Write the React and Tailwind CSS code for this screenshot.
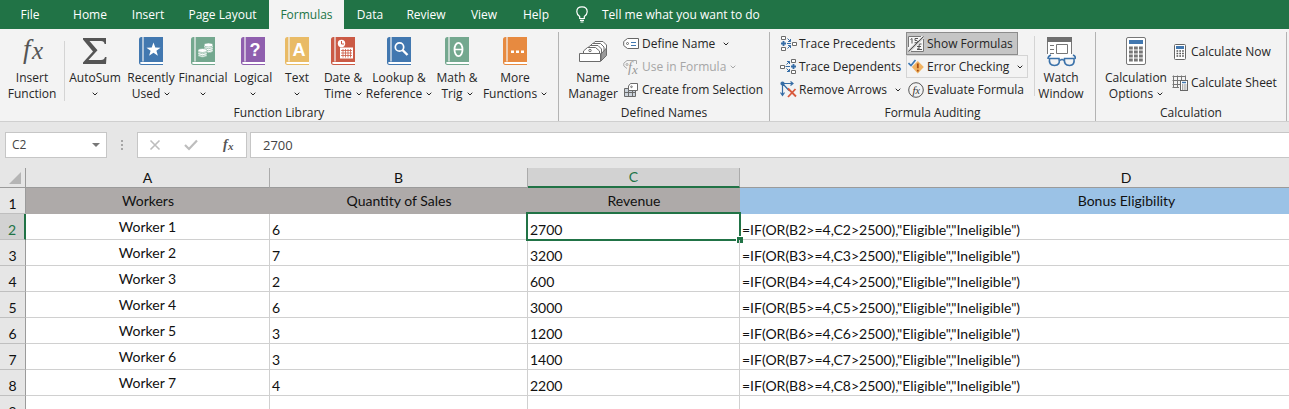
import React, { useState } from "react";
import clsx from "clsx";

const TABS = [
  { name: "File", width: "w-15" },
  { name: "Home", width: "w-15" },
  { name: "Insert", width: "w-14" },
  { name: "Page Layout", width: "w-[93px]" },
  { name: "Formulas", width: "w-[75px]" },
  { name: "Data", width: "w-13" },
  { name: "Review", width: "w-15" },
  { name: "View", width: "w-14" },
  { name: "Help", width: "w-12" },
];

const WORKERS = [
  { name: "Worker 1", sales: 6, revenue: 2700 },
  { name: "Worker 2", sales: 7, revenue: 3200 },
  { name: "Worker 3", sales: 2, revenue: 600 },
  { name: "Worker 4", sales: 6, revenue: 3000 },
  { name: "Worker 5", sales: 3, revenue: 1200 },
  { name: "Worker 6", sales: 3, revenue: 1400 },
  { name: "Worker 7", sales: 4, revenue: 2200 },
];

/* ---------- ICONS ---------- */

const Chevron = ({ className }) => (
  <svg viewBox="0 0 6 4" className={clsx("h-1 w-1.5 shrink-0", className)} fill="none" stroke="currentColor">
    <path d="M.7.7 3 3 5.3.7" />
  </svg>
);

const Book = ({ color, children }) => (
  <svg viewBox="0 0 24 28" className="h-7 w-6">
    <path d="M2.5 0H24V25H2.5L0 26.5V2.5Q0 0 2.5 0Z" fill={color} />
    <path d="M4 0V24.5" stroke="#f3f3f3" strokeWidth="1.2" />
    <path d="M1 26Q1.5 25 3 25H24V27H2Q1 27 1 26Z" fill="#fff" />
    <path d="M0 25Q0 28 2.5 28H24V27H3Q1 27 1 25.5Z" fill={color} />
    {children}
  </svg>
);

const BookLetter = ({ children }) => (
  <text
    x="14"
    y="19"
    textAnchor="middle"
    fill="#fff"
    fontSize="18"
    fontWeight="bold"
    fontFamily="Liberation Sans, sans-serif"
  >
    {children}
  </text>
);

const FxIcon = () => (
  <svg viewBox="0 0 26 28" className="h-7 w-[26px] overflow-visible" fill="#555">
    <text x="4" y="21" fontSize="27" fontStyle="italic" fontFamily="Liberation Serif, serif">f</text>
    <text x="13" y="22" fontSize="25" fontStyle="italic" fontFamily="Liberation Serif, serif">x</text>
  </svg>
);

const SigmaIcon = () => (
  <svg viewBox="0 0 26 28" className="h-7 w-[26px]" fill="#555">
    <path d="M1 1H24V7H22.6Q22.2 4 19 4H7.5L15.5 13.2 6.5 23H19Q22.4 23 23 20H24.5L24 27H1V25.6L11 14.6 1 2.6Z" />
  </svg>
);

const StarBook = () => (
  <Book color="#4278b0">
    <path d="M14.5 5.5 16.3 10.5 21.5 10.7 17.4 13.8 18.9 18.7 14.5 15.8 10.1 18.7 11.6 13.8 7.5 10.7 12.7 10.5Z" fill="#fff" />
  </Book>
);

const CoinsBook = () => (
  <Book color="#74a88f">
    <g fill="#fff" stroke="#74a88f" strokeWidth=".6">
      <path d="M13 12.5V14.5Q17.5 17 22 14.5V12.5Z" />
      <path d="M13 10.5V12.5Q17.5 15 22 12.5V10.5Z" />
      <path d="M13 8V10.5Q17.5 13 22 10.5V8Z" />
      <ellipse cx="17.5" cy="8" rx="4.5" ry="2" />
      <path d="M7 17.5V19Q11.5 21.5 16 19V17.5Z" />
      <path d="M7 15.5V17.5Q11.5 20 16 17.5V15.5Z" />
      <path d="M7 13.5V15.5Q11.5 18 16 15.5V13.5Z" />
      <ellipse cx="11.5" cy="13.5" rx="4.5" ry="2" />
    </g>
  </Book>
);

const DateBook = () => (
  <Book color="#cb5a45">
    <circle cx="10.5" cy="6.5" r="3.7" fill="#fff" />
    <path d="M10.5 4V7H13" stroke="#cb5a45" fill="none" />
    <path d="M9 10.5H22V21.5H9Z" fill="#fff" />
    <path d="M10 13.5H21M10 16H21M10 18.5H21M12 12V20.5M14.5 12V20.5M17 12V20.5M19.5 12V20.5" stroke="#cb5a45" strokeWidth=".8" />
  </Book>
);

const LookupBook = () => (
  <Book color="#4278b0">
    <circle cx="12.5" cy="10" r="4.2" fill="none" stroke="#fff" strokeWidth="1.7" />
    <path d="M15.5 13 20.5 18" stroke="#fff" strokeWidth="2.4" />
  </Book>
);

const ThetaBook = () => (
  <Book color="#74a88f">
    <ellipse cx="13.5" cy="12.5" rx="4" ry="6.7" fill="none" stroke="#fff" strokeWidth="1.8" />
    <path d="M10 12.5H17" stroke="#fff" strokeWidth="1.5" />
  </Book>
);

const MoreBook = () => (
  <Book color="#e78a40">
    <path d="M8 13.5H11V16H8ZM13 13.5H16V16H13ZM18 13.5H21V16H18Z" fill="#fff" />
  </Book>
);

const NameManagerIcon = () => (
  <svg viewBox="0 0 28 28" className="h-7 w-7" fill="#fff" stroke="#6b6b6b">
    <path d="M12.5 8.5 16 4.5H24L27.5 8V17L23 22" />
    <path d="M9.5 10.5 13.5 6.5H21.5L25 10V18" />
    <path d="M7 13 11 8.5H19L22.5 12V20" />
    <path d="M4.5 16.5V14L8.5 10.5H16.5L20.5 14V16.5" />
    <circle cx="11" cy="13.5" r="1.2" />
    <path d="M22 17 27.5 11V18.5L22 24Z" fill="#999" />
    <path d="M.5 16.5H21.5V24.5H.5Z" />
  </svg>
);

const TagIcon = () => (
  <svg viewBox="0 0 16 16" className="h-4 w-4" fill="#fff" stroke="#666">
    <path d="M4.5 2.5H15.5V12.5H4.5L.7 9.5V5.5Z" />
    <circle cx="4.5" cy="7.5" r="1" />
    <path d="M8 6.5H13M8 9.5H13" stroke="#4278b0" />
  </svg>
);

const UseInFormulaIcon = () => (
  <svg viewBox="0 0 16 16" className="h-4 w-4 overflow-visible" fill="none" stroke="#aaa">
    <path d="M13.5 5V1.5H4L.8 4.2V7L4 9.5" />
    <circle cx="4" cy="5.5" r="1" />
    <text x="5" y="13" fontSize="14" fontStyle="italic" fontFamily="Liberation Serif, serif" fill="#999" stroke="none">f</text>
    <text x="9" y="15" fontSize="13" fontStyle="italic" fontFamily="Liberation Serif, serif" fill="#999" stroke="none">x</text>
  </svg>
);

const CreateIcon = () => (
  <svg viewBox="0 0 16 16" className="h-4 w-4" fill="#fff" stroke="#6b6b6b">
    <path d="M1.5 6.5H12.5V14.5H1.5Z" fill="#ccd4dc" />
    <path d="M1.5 10.5H12.5M5.5 6.5V14.5M9.5 6.5V14.5" />
    <path d="M7.5 1.5H14.5V8.5H5.5V4Z" />
    <circle cx="8.5" cy="4.8" r=".8" />
  </svg>
);

const PrecedentsIcon = () => (
  <svg viewBox="0 0 17 17" className="h-[17px] w-[17px]" fill="#fff" stroke="#6b6b6b">
    <path d="M1.5 1.5H5.5V4.5H1.5ZM1.5 12.5H5.5V15.5H1.5ZM12.5 7.5H16.5V10.5H12.5Z" />
    <path d="M1 8.5H6M3.5 6V11" stroke="#356ca5" strokeWidth="1.8" />
    <path d="M7 8.5H11M7.5 3.5 10.5 6.5M10.5 4V6.5H8M7.5 13.5 10.5 10.5M8 10.5H10.5V13" stroke="#356ca5" fill="none" />
  </svg>
);

const DependentsIcon = () => (
  <svg viewBox="0 0 17 17" className="h-[17px] w-[17px]" fill="#fff" stroke="#6b6b6b">
    <path d="M11.5 1.5H15.5V4.5H11.5ZM11.5 12.5H15.5V15.5H11.5ZM.5 7.5H4.5V10.5H.5Z" />
    <path d="M11 8.5H16M13.5 6V11" stroke="#356ca5" strokeWidth="1.8" />
    <path d="M5.5 8.5H10M6.5 6.5 9.5 3.5M7 3.5H9.5V6M6.5 10.5 9.5 13.5M7 13.5H9.5V11" stroke="#356ca5" fill="none" />
  </svg>
);

const RemoveArrowsIcon = () => (
  <svg viewBox="0 0 17 17" className="h-[17px] w-[17px]" fill="none" stroke="#356ca5" strokeWidth="1.2">
    <path d="M2.5 3V14M.5 11.5 2.5 14.5 4.5 11.5M3 2.5H13M10.5.5 13 2.5 10.5 4.5M3 3 9 9.5" />
    <circle cx="2.5" cy="2.5" r="1.5" fill="#356ca5" />
    <path d="M8 7.5 16 15.5M15.5 8 8 16" stroke="#d8593c" strokeWidth="1.8" />
  </svg>
);

const ShowFormulasIcon = () => (
  <svg viewBox="0 0 16 16" className="h-4 w-4" fill="none" stroke="#555">
    <path d="M0 0H15L0 14ZM16 2V16H2Z" fill="#f6f6f6" stroke="none" />
    <path d="M.5 11V.5H13M15.5 3V15.5H3" stroke="#777" />
    <path d="M15.5.5.5 15.5M2.5 3.5 4 2.5V7.5M10 2.5H7V4.5Q9.5 4 9.5 5.5 9.5 7 6.5 6.8M13.5 8Q10.5 7 11 10V13H9M9 10.5H13M9 13.5H14" />
  </svg>
);

const ErrorIcon = () => (
  <svg viewBox="0 0 16 16" className="h-4 w-4" fill="none">
    <path d="M9.8 2 15.8 8 9.8 14.5 3.8 8Z" fill="#f0b362" />
    <path d="M9.8 4.5V9.3M9.8 10.7V12.5" stroke="#a84e12" strokeWidth="1.8" />
    <path d="M.5 4 3 6.5 7.5 1" stroke="#3b78b5" strokeWidth="1.6" />
  </svg>
);

const EvaluateIcon = () => (
  <svg viewBox="0 0 16 16" className="h-4 w-4" fill="none" stroke="#555">
    <circle cx="8" cy="8" r="7.3" />
    <text x="4.5" y="11.5" fontSize="11" fontStyle="italic" fontFamily="Liberation Serif, serif" fill="#333" stroke="none">f</text>
    <text x="7.5" y="11.5" fontSize="10" fontStyle="italic" fontFamily="Liberation Serif, serif" fill="#333" stroke="none">x</text>
  </svg>
);

const WatchIcon = () => (
  <svg viewBox="0 0 30 30" className="h-[30px] w-[30px]" fill="none">
    <path d="M1.5 1H25.5V21H1.5Z" fill="#fff" />
    <path d="M1.5 17V5M25.5 5V17" stroke="#777" />
    <path d="M1 0H26V5H1Z" fill="#6f6f6f" />
    <path d="M4 8.5H8M4 12.5H8M4 16.5H8M10.5 7.5H21.5V16.5H10.5Z" stroke="#777" />
    <path d="M2 22Q2 19 5 18M27 18Q30 19 29 22M14 23.5Q16 21.5 18 23.5" stroke="#3b72aa" strokeWidth="1.6" />
    <path d="M3.5 21.5H13Q14.5 28.5 8.5 28.5 2.5 28.5 3.5 21.5ZM18.5 21.5H28Q29 28.5 23.5 28.5 17.5 28.5 18.5 21.5Z" fill="#f3f3f3" stroke="#3b72aa" strokeWidth="1.6" />
  </svg>
);

const CalculatorIcon = () => (
  <svg viewBox="0 0 20 28" className="h-7 w-5" fill="none">
    <rect x=".5" y=".5" width="19" height="27" rx="1.5" fill="#fff" stroke="#777" />
    <path d="M3 3H17V7H3Z" fill="#4278b0" />
    <path d="M3 11H17M3 15H17M3 19H17M3 23H17" stroke="#777" strokeWidth="2.8" strokeDasharray="3.8 1.2" />
  </svg>
);

const CalcNowIcon = () => (
  <svg viewBox="0 0 12 16" className="h-4 w-3" fill="none">
    <rect x=".5" y=".5" width="11" height="15" rx="1" fill="#fff" stroke="#666" />
    <path d="M2 2H10V5H2Z" fill="#4278b0" />
    <path d="M2.5 7H10M2.5 9.5H10M2.5 12H10" stroke="#555" strokeWidth="1.5" strokeDasharray="1.7 1.1" />
  </svg>
);

const CalcSheetIcon = () => (
  <svg viewBox="0 0 16 16" className="h-4 w-4" fill="none">
    <path d="M.5 1.5H13.5M.5 5.5H13.5M.5 9.5H8M1.5.5V12.5M5.5.5V12.5M9.5.5V5M13.5.5V5M.5 12.5H7" stroke="#777" />
    <rect x="8.5" y="5.5" width="7" height="10" fill="#fff" stroke="#666" />
    <path d="M10 7.5H14" stroke="#4278b0" strokeWidth="1.5" />
    <path d="M10 10H14.5M10 12H14.5M10 14H14.5" stroke="#555" strokeDasharray="1 .7" />
  </svg>
);

const BulbIcon = () => (
  <svg viewBox="0 0 12 17" className="h-[17px] w-3" fill="none" stroke="#fff" strokeWidth="1.2">
    <path d="M3.7 12.5V10.5Q.8 8.5.8 5.7.8.8 6 .8T11.2 5.7Q11.2 8.5 8.3 10.5V12.5ZM4 14.3H8M4.5 16H7.5" />
  </svg>
);

/* ---------- RIBBON PARTS ---------- */

// big button: icon on top, one or two lines of label under it
const BigButton = ({ icon, top, bottom, menu, width }) => (
  <button className={clsx("flex shrink-0 flex-col items-center whitespace-nowrap leading-4", width)}>
    <span className="mb-1 flex h-[29px] items-start">{icon}</span>
    <span>{top}</span>
    <span className="flex h-4 items-center gap-1">
      {bottom}
      {menu && <Chevron />}
    </span>
  </button>
);

const SmallButton = ({ icon, children, menu, menuGap = "ml-1", className, ...rest }) => (
  <button
    className={clsx("flex h-[23px] w-max items-center border whitespace-nowrap", className || "border-transparent")}
    {...rest}
  >
    <span className="mr-0.5 flex w-[18px] items-center justify-center">{icon}</span>
    {children}
    {menu && <Chevron className={menuGap} />}
  </button>
);

const Group = ({ label, width, children }) => (
  <section aria-label={label} className={clsx("flex shrink-0 flex-col border-r border-[#b3b3b3]", width)}>
    <div className="flex h-[73px] items-start">{children}</div>
    <div className="text-center leading-4">{label}</div>
  </section>
);

const ThinLine = () => <div className="mt-1 h-15 w-px bg-[#d4d4d4]" />;

const Ribbon = () => {
  const [showFormulas, setShowFormulas] = useState(true);

  return (
    <div className="flex h-[93px] shrink-0 border-b border-[#cfcfcf] bg-[#f3f3f3] pt-[3px] text-xs text-[#262626]">
      <Group label="Function Library" width="w-[559px]">
        <div className="flex pt-[5px]">
          <BigButton width="w-16" icon={<FxIcon />} top="Insert" bottom="Function" />
          <ThinLine />
          <BigButton width="w-15" icon={<SigmaIcon />} top="AutoSum" menu />
          <BigButton width="w-13" icon={<StarBook />} top="Recently" bottom="Used" menu />
          <BigButton width="w-13" icon={<CoinsBook />} top="Financial" menu />
          <BigButton width="w-12" icon={<Book color="#8f5fae"><BookLetter>?</BookLetter></Book>} top="Logical" menu />
          <BigButton width="w-10" icon={<Book color="#e9bb66"><BookLetter>A</BookLetter></Book>} top="Text" menu />
          <BigButton width="w-13" icon={<DateBook />} top="Date &" bottom="Time" menu />
          <BigButton width="w-15" icon={<LookupBook />} top="Lookup &" bottom="Reference" menu />
          <BigButton width="w-14" icon={<ThetaBook />} top="Math &" bottom="Trig" menu />
          <BigButton width="w-15" icon={<MoreBook />} top="More" bottom="Functions" menu />
        </div>
      </Group>

      <Group label="Defined Names" width="w-[211px]">
        <div className="flex pt-[5px] pl-1.5">
          <BigButton width="w-14" icon={<NameManagerIcon />} top="Name" bottom="Manager" />
        </div>
        <div>
          <SmallButton icon={<TagIcon />} menu menuGap="ml-2">Define Name</SmallButton>
          <SmallButton icon={<UseInFormulaIcon />} menu disabled className="border-transparent text-[#a6a6a6]">
            Use in Formula
          </SmallButton>
          <SmallButton icon={<CreateIcon />}>Create from Selection</SmallButton>
        </div>
      </Group>

      <Group label="Formula Auditing" width="w-[326px]">
        <div className="w-34 pl-2">
          <SmallButton icon={<PrecedentsIcon />}>Trace Precedents</SmallButton>
          <SmallButton icon={<DependentsIcon />}>Trace Dependents</SmallButton>
          <SmallButton icon={<RemoveArrowsIcon />} menu menuGap="ml-2">Remove Arrows</SmallButton>
        </div>
        <div className="w-32">
          <SmallButton
            icon={<ShowFormulasIcon />}
            aria-pressed={showFormulas}
            onClick={() => setShowFormulas(!showFormulas)}
            className={showFormulas ? "border-[#8c8c8c] bg-[#c5c5c5] pr-1" : "border-transparent pr-1"}
          >
            Show Formulas
          </SmallButton>
          <SmallButton icon={<ErrorIcon />} menu menuGap="ml-2" className="border-[#d4d4d4] pr-1">
            Error Checking
          </SmallButton>
          <SmallButton icon={<EvaluateIcon />}>Evaluate Formula</SmallButton>
        </div>
        <ThinLine />
        <div className="pt-[5px]">
          <BigButton width="w-13" icon={<WatchIcon />} top="Watch" bottom="Window" />
        </div>
      </Group>

      <Group label="Calculation" width="w-[191px]">
        <div className="flex pt-[5px] pl-2">
          <BigButton width="w-16" icon={<CalculatorIcon />} top="Calculation" bottom="Options" menu />
        </div>
        <div className="flex flex-col gap-2 pt-2 pl-0.5">
          <SmallButton icon={<CalcNowIcon />}>Calculate Now</SmallButton>
          <SmallButton icon={<CalcSheetIcon />}>Calculate Sheet</SmallButton>
        </div>
      </Group>
    </div>
  );
};

const FormulaBar = () => (
  <div className="flex h-[46px] shrink-0 items-center pl-[5px] text-xs text-[#444]">
    <div className="flex h-[26px] w-[102px] items-center border border-[#c6c6c6] bg-white">
      <input aria-label="Name Box" defaultValue="C2" className="w-full min-w-0 flex-1 pl-1.5 outline-none" />
      <button aria-label="Open name list" className="flex h-full w-5 items-center justify-center">
        <svg viewBox="0 0 8 4" className="h-1 w-2" fill="#777"><path d="M0 0H8L4 4Z" /></svg>
      </button>
    </div>
    <div className="flex w-[30px] flex-col items-center gap-0.5">
      <span className="h-0.5 w-0.5 bg-[#a6a6a6]" />
      <span className="h-0.5 w-0.5 bg-[#a6a6a6]" />
      <span className="h-0.5 w-0.5 bg-[#a6a6a6]" />
    </div>
    <div className="flex h-[26px] w-[110px] items-center justify-around border border-[#c6c6c6] bg-white">
      <button aria-label="Cancel">
        <svg viewBox="0 0 12 12" className="h-3 w-3" stroke="#bdbdbd" strokeWidth="1.6"><path d="M1.5 1.5 10.5 10.5M10.5 1.5 1.5 10.5" /></svg>
      </button>
      <button aria-label="Enter">
        <svg viewBox="0 0 14 12" className="h-3 w-3.5" fill="none" stroke="#bdbdbd" strokeWidth="2.2"><path d="M1 6 5 10 13 1.5" /></svg>
      </button>
      <button aria-label="Insert Function">
        <svg viewBox="0 0 14 14" className="h-3.5 w-3.5 overflow-visible" fill="#555" fontFamily="Liberation Serif, serif" fontStyle="italic" fontWeight="bold">
          <text x="2" y="11" fontSize="14">f</text>
          <text x="7" y="12" fontSize="11">x</text>
        </svg>
      </button>
    </div>
    <input
      aria-label="Formula Bar"
      defaultValue="2700"
      className="ml-[3px] h-[26px] min-w-0 flex-1 border border-r-0 border-[#c6c6c6] bg-white pl-3 text-[13px] outline-none"
    />
  </div>
);

/* ---------- SHEET ---------- */

const RowNumber = ({ n, active }) => (
  <th
    scope="row"
    className={clsx(
      "border-b border-b-[#bfbfbf] p-0 align-bottom font-normal",
      active ? "border-r-2 border-r-[#217346] bg-[#d2d2d2] text-[#217346]" : "border-r border-r-[#9b9b9b] bg-[#e6e6e6]"
    )}
  >
    {n}
  </th>
);

const Sheet = () => (
  <div className="min-h-0 flex-1 overflow-hidden bg-white">
    <table className="w-[1513px] table-fixed border-separate border-spacing-0 font-[Lato,Carlito,sans-serif] text-sm leading-[18px] text-[#111]">
      <colgroup>
        <col className="w-[26px]" />
        <col className="w-[244px]" />
        <col className="w-[258px]" />
        <col className="w-[212px]" />
        <col />
      </colgroup>
      <thead>
        <tr className="h-5 bg-[#e6e6e6]">
          <td className="border-r border-b border-[#9b9b9b] p-0">
            <svg viewBox="0 0 12 12" className="ml-auto mr-1 h-3 w-3" fill="#b5b5b5"><path d="M12 0V12H0Z" /></svg>
          </td>
          {["A", "B", "C", "D"].map((col) => (
            <th
              key={col}
              scope="col"
              className={clsx(
                "border-r border-r-[#ababab] p-0 font-normal",
                col === "C" ? "border-b-2 border-b-[#217346] bg-[#d2d2d2] text-[#217346]" : "border-b border-b-[#9b9b9b]"
              )}
            >
              {col}
            </th>
          ))}
        </tr>
      </thead>
      <tbody>
        <tr className="h-[26px]">
          <RowNumber n={1} />
          <td className="bg-[#aeaaa9] p-0 text-center">Workers</td>
          <td className="bg-[#aeaaa9] p-0 text-center">Quantity of Sales</td>
          <td className="bg-[#aeaaa9] p-0 text-center">Revenue</td>
          <td className="bg-[#9bc2e6] p-0 text-center">Bonus Eligibility</td>
        </tr>
        {WORKERS.map((worker, i) => {
          const row = i + 2;
          const active = row === 2;
          return (
            <tr key={row} className="h-[26px]">
              <RowNumber n={row} active={active} />
              <td className="border-r border-b border-[#d0d0d0] p-0 text-center">{worker.name}</td>
              <td className="border-r border-b border-[#d0d0d0] p-0 pl-0.5 align-bottom">{worker.sales}</td>
              <td className="relative border-r border-b border-[#d0d0d0] p-0 pl-0.5 align-bottom">
                {worker.revenue}
                {active && (
                  <div className="absolute -inset-0.5 border-2 border-[#217346]">
                    <div className="absolute -right-1 -bottom-1 h-[7px] w-[7px] border-t border-l border-white bg-[#217346]" />
                  </div>
                )}
              </td>
              <td className="border-b border-[#d0d0d0] p-0 pl-0.5 align-bottom">
                {`=IF(OR(B${row}>=4,C${row}>2500),"Eligible","Ineligible")`}
              </td>
            </tr>
          );
        })}
        <tr className="h-[26px]">
          <RowNumber n={9} />
          <td className="border-r border-[#d0d0d0]" />
          <td className="border-r border-[#d0d0d0]" />
          <td className="border-r border-[#d0d0d0]" />
          <td />
        </tr>
      </tbody>
    </table>
  </div>
);

const App = () => {
  const [activeTab, setActiveTab] = useState("Formulas");

  return (
    <div className="flex h-screen flex-col overflow-hidden bg-[#e6e6e6] font-['Open_Sans','Noto_Sans',sans-serif]">
      <nav className="flex h-[29px] shrink-0 items-stretch bg-[#217346] text-xs text-white">
        {TABS.map((tab) => (
          <button
            key={tab.name}
            onClick={() => setActiveTab(tab.name)}
            className={clsx("shrink-0 whitespace-nowrap", tab.width, activeTab === tab.name && "bg-[#f3f3f3] text-[#217346]")}
          >
            {tab.name}
          </button>
        ))}
        <button className="ml-4 flex items-center gap-3.5 whitespace-nowrap">
          <BulbIcon />
          Tell me what you want to do
        </button>
      </nav>
      <Ribbon />
      <FormulaBar />
      <Sheet />
    </div>
  );
};

export default App;
